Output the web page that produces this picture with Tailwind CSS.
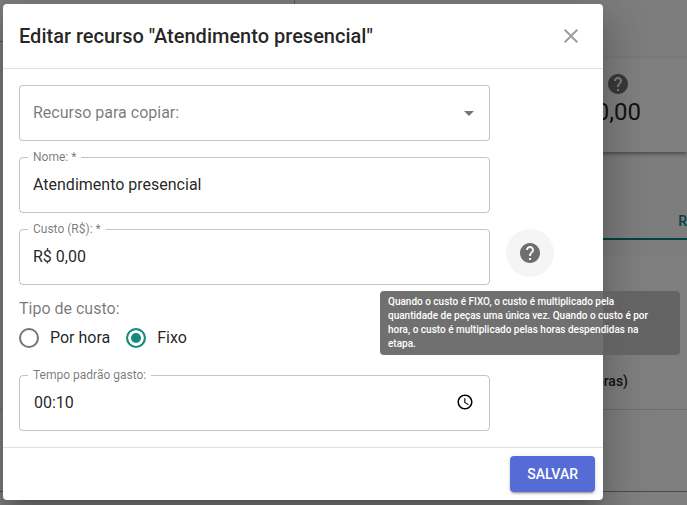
<!DOCTYPE html>
<html lang="pt-BR">
<head>
<meta charset="utf-8">
<meta name="viewport" content="width=device-width, initial-scale=1">
<title>Editar recurso</title>
<script src="https://cdn.jsdelivr.net/npm/@tailwindcss/browser@4"></script>
</head>
<body class="relative min-h-screen overflow-hidden bg-[#fafafa] font-[Roboto,sans-serif] text-base text-black/87">

<!-- Page behind the dialog -->
<main aria-hidden="true" class="flex h-screen flex-col">
  <div class="flex h-[58px]">
    <div class="h-[42px] w-[295px] border-r border-b border-black/30"></div>
  </div>
  <section class="ml-[295px] flex h-[94px] flex-col items-end bg-white pr-[46px] shadow-[0_2px_4px_rgba(0,0,0,0.4)]">
    <svg class="mt-[14px] mr-[11px] size-6 fill-[#757575]" viewBox="0 0 24 24"><path d="M12 2C6.48 2 2 6.48 2 12s4.48 10 10 10 10-4.48 10-10S17.52 2 12 2zm1 17h-2v-2h2v2zm2.07-7.75l-.9.92C13.45 12.9 13 13.5 13 15h-2v-.5c0-1.1.45-2.1 1.17-2.83l1.24-1.26c.37-.36.59-.86.59-1.41 0-1.1-.9-2-2-2s-2 .9-2 2H8c0-2.21 1.79-4 4-4s4 1.79 4 4c0 .88-.36 1.68-.93 2.25z"/></svg>
    <p class="text-2xl">R$ 0,00</p>
  </section>
  <nav class="ml-[295px] flex h-[88px] items-end justify-end border-b-2 border-[#00897b]">
    <span class="pb-[7px] text-sm font-medium text-[#00897b]">R</span>
  </nav>
  <div class="mt-4 grow bg-white">
    <div class="flex h-[154px] items-end justify-end border-b border-black/15 pr-[59px] pb-[18px] text-sm font-medium">Tempo gasto (horas)</div>
    <div class="h-[82px] border-b border-black/40"></div>
  </div>
</main>
<div class="absolute inset-0 bg-black/50"></div>

<div role="dialog" aria-modal="true" aria-labelledby="dialog-title" class="absolute top-1 left-[3px] w-full max-w-[600px] rounded bg-white shadow-[0_11px_15px_-7px_rgba(0,0,0,0.2),0_24px_38px_3px_rgba(0,0,0,0.14),0_9px_46px_8px_rgba(0,0,0,0.12)]">
  <header class="flex h-[65px] items-center justify-between border-b border-black/12 px-4">
    <h2 id="dialog-title" class="text-xl font-medium">Editar recurso "Atendimento presencial"</h2>
    <button type="button" aria-label="Fechar" class="flex size-8 items-center justify-center">
      <svg class="size-6 fill-[#9e9e9e]" viewBox="0 0 24 24"><path d="M19 6.41L17.59 5 12 10.59 6.41 5 5 6.41 10.59 12 5 17.59 6.41 19 12 13.41 17.59 19 19 17.59 13.41 12z"/></svg>
    </button>
  </header>

  <form>
    <div class="p-4">
      <div class="flex flex-col gap-4 pr-[97px]">
        <div class="relative">
          <select aria-label="Recurso para copiar" class="h-14 w-full appearance-none rounded border border-black/23 bg-white px-[13px] text-black/54">
            <option>Recurso para copiar:</option>
          </select>
          <svg class="pointer-events-none absolute top-4 right-[9px] size-6 fill-black/54" viewBox="0 0 24 24"><path d="M7 10l5 5 5-5z"/></svg>
        </div>
        <div class="relative">
          <label for="nome" class="absolute -top-2 left-[9px] bg-white px-[5px] text-xs text-black/54">Nome: *</label>
          <input id="nome" type="text" value="Atendimento presencial" class="h-14 w-full rounded border border-black/23 px-[13px] pb-[2px]">
        </div>
        <div class="relative">
          <label for="custo" class="absolute -top-2 left-[9px] bg-white px-[5px] text-xs text-black/54">Custo (R$): *</label>
          <input id="custo" type="text" value="R$ 0,00" class="h-14 w-full rounded border border-black/23 px-[13px] pb-[2px]">
          <button type="button" aria-label="Ajuda" aria-describedby="ajuda-custo" class="absolute top-0 left-full ml-4 flex size-12 items-center justify-center rounded-full bg-black/4">
            <svg class="size-6 fill-[#6e6e6e]" viewBox="0 0 24 24"><path d="M12 2C6.48 2 2 6.48 2 12s4.48 10 10 10 10-4.48 10-10S17.52 2 12 2zm1 17h-2v-2h2v2zm2.07-7.75l-.9.92C13.45 12.9 13 13.5 13 15h-2v-.5c0-1.1.45-2.1 1.17-2.83l1.24-1.26c.37-.36.59-.86.59-1.41 0-1.1-.9-2-2-2s-2 .9-2 2H8c0-2.21 1.79-4 4-4s4 1.79 4 4c0 .88-.36 1.68-.93 2.25z"/></svg>
          </button>
          <div id="ajuda-custo" role="tooltip" class="absolute top-[62px] left-full z-10 -ml-[110px] w-[300px] rounded bg-[#616161]/90 py-1 pr-5 pl-2 text-[10px] leading-[14px] font-medium text-white">Quando o custo é FIXO, o custo é multiplicado pela quantidade de peças uma única vez. Quando o custo é por hora, o custo é multiplicado pelas horas despendidas na etapa.</div>
        </div>
      </div>

      <fieldset class="mt-3">
        <legend class="leading-6 text-black/54">Tipo de custo:</legend>
        <div class="flex h-[34px] items-center gap-4">
          <label class="flex items-center gap-[11px]">
            <input type="radio" name="tipo" class="size-5 appearance-none rounded-full border-2 border-[#757575]">
            Por hora
          </label>
          <label class="flex items-center gap-[11px]">
            <input type="radio" name="tipo" checked class="size-5 appearance-none rounded-full border-2 border-[#16897b] bg-[#16897b] shadow-[inset_0_0_0_3px_white]">
            Fixo
          </label>
        </div>
      </fieldset>

      <div class="mt-5 pr-[97px]">
        <div class="relative">
          <label for="tempo" class="absolute -top-2 left-[9px] bg-white px-[5px] text-xs text-black/54">Tempo padrão gasto:</label>
          <input id="tempo" type="text" value="00:10" class="h-14 w-full rounded border border-black/23 px-[14px] pb-[2px]">
          <button type="button" aria-label="Escolher horário" class="absolute inset-y-0 right-4 flex items-center pb-[2px]">
            <svg class="size-[18px]" viewBox="0 0 24 24"><path d="M11.99 2C6.47 2 2 6.48 2 12s4.47 10 9.99 10C17.52 22 22 17.52 22 12S17.52 2 11.99 2zM12 20c-4.42 0-8-3.58-8-8s3.58-8 8-8 8 3.58 8 8-3.58 8-8 8zm.5-13H11v6l5.250 3.150.750-1.230-4.500-2.670z"/></svg>
          </button>
        </div>
      </div>
    </div>

    <footer class="flex justify-end border-t border-black/12 p-2">
      <button type="submit" class="h-9 rounded bg-[#556cd6] px-[17px] text-sm font-medium text-white shadow-[0_3px_1px_-2px_rgba(0,0,0,0.2),0_2px_2px_rgba(0,0,0,0.14),0_1px_5px_rgba(0,0,0,0.12)]">SALVAR</button>
    </footer>
  </form>
</div>
</body>
</html>
